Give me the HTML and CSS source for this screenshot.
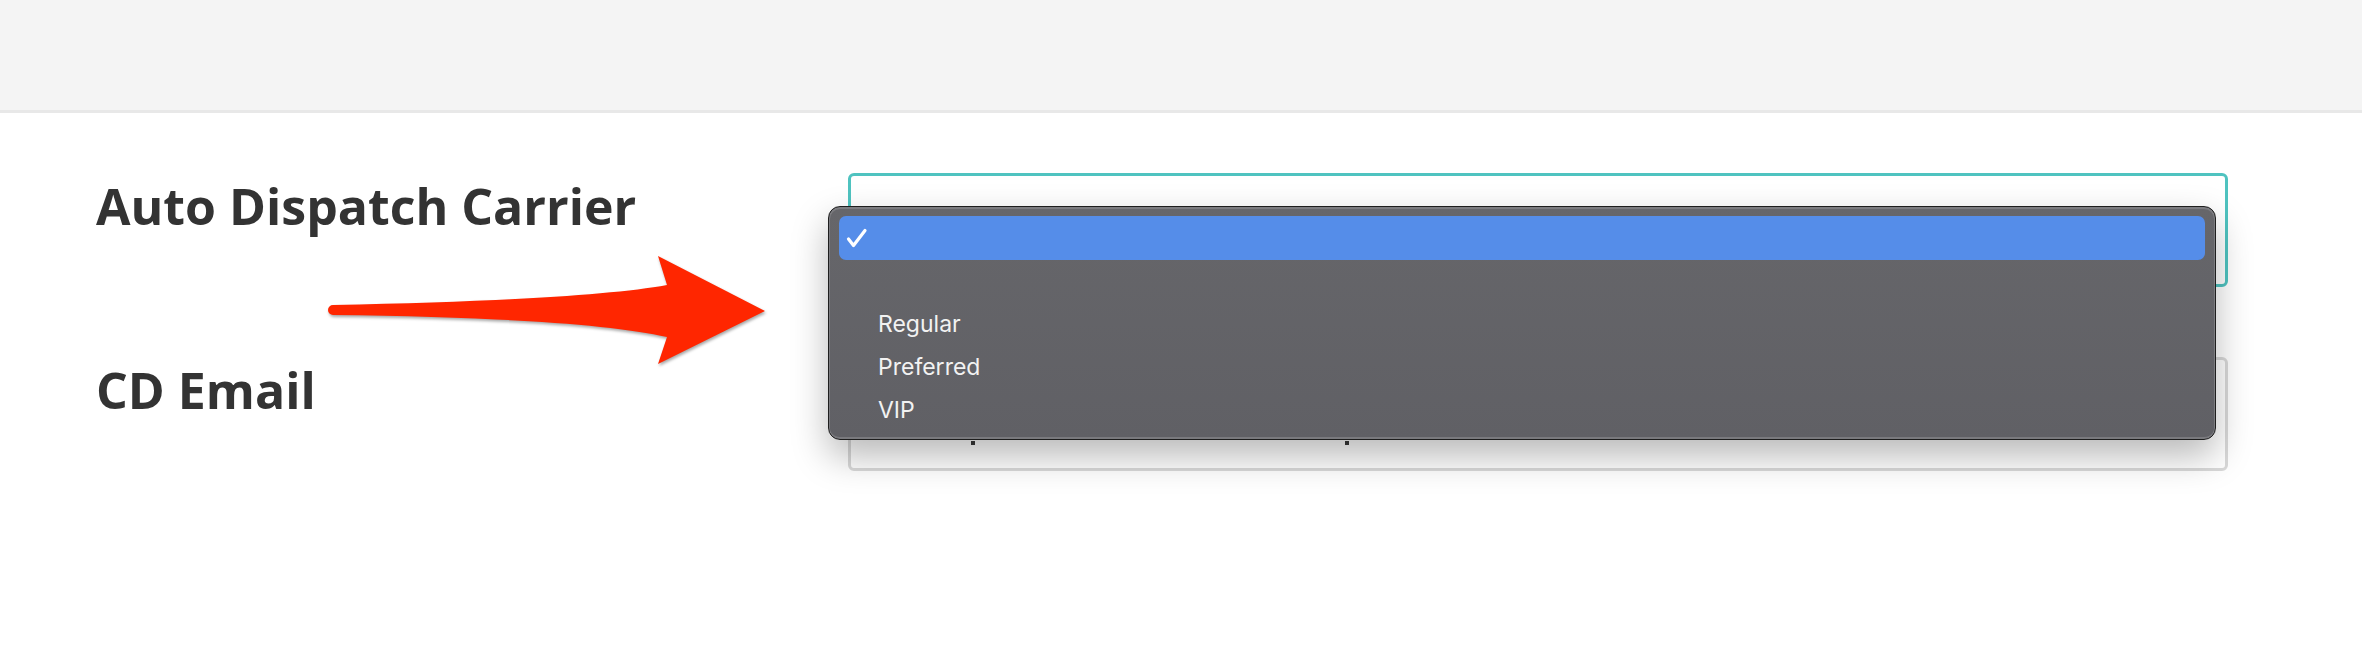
FILE: index.html
```html
<!DOCTYPE html>
<html lang="en">
<head>
  <meta charset="UTF-8" />
  <meta name="viewport" content="width=device-width, initial-scale=1.0"/>
  <title>Carrier Settings</title>
  <link rel="stylesheet" href="styles.css">
</head>
<body>

  <div class="topbar"></div>

  <div class="settings-form">
    <div class="form-row">
      <label class="form-label">Auto Dispatch Carrier</label>
      <div class="field field-focus">
        <!-- open dropdown of the select -->
        <div class="menu">
          <div class="menu-item selected">
            <svg class="check" width="22" height="20" viewBox="0 0 22 20">
              <path d="M2.5 11 L7.5 17.5 L19 2.5" fill="none" stroke="#fff" stroke-width="3.2" stroke-linecap="round" stroke-linejoin="round"/>
            </svg>
          </div>
          <div class="menu-item"></div>
          <div class="menu-item">Regular</div>
          <div class="menu-item">Preferred</div>
          <div class="menu-item">VIP</div>
        </div>
      </div>
    </div>

    <div class="form-row">
      <label class="form-label">CD Email</label>
      <div class="field">
        <span class="tick"></span>
        <span class="tick"></span>
      </div>
    </div>
  </div>

  <!-- annotation arrow -->
  <svg class="arrow" width="460" height="120" viewBox="320 250 460 120">
    <path d="M333 305 Q585 300 667 285 L658 256 L765 311 L658 364 L667 337 Q585 318 333 315 A5 5 0 0 1 333 305 Z" fill="#ff2600"/>
  </svg>

</body>
</html>
```

FILE: styles.css
```css
body {
  margin: 0;
  font-family: "Open Sans", Arial, sans-serif;
  background: #fff;
  position: relative;
  min-height: 668px;
  overflow: hidden;
}

.topbar {
  height: 110px;
  background: #f4f4f4;
  border-bottom: 3px solid #e8e8e8;
}

.settings-form {
  padding: 60px 134px 0 96px;
  display: flex;
  flex-direction: column;
  gap: 70px;
}

.form-row {
  display: flex;
  align-items: flex-start;
}

.form-label {
  width: 752px;
  flex-shrink: 0;
  font-size: 50px;
  line-height: 50px;
  font-weight: 700;
  color: #333;
  padding-top: 8px;
}

.field {
  flex: 1;
  height: 114px;
  box-sizing: border-box;
  border: 3px solid #d9d9d9;
  border-radius: 6px;
  background: #fff;
  position: relative;
  display: flex;
  align-items: flex-start;
  gap: 370px;
  padding: 81px 0 0 120px;
}
.field-focus {
  border-color: #4fc3c0;
  z-index: 2;
}

.tick {
  width: 4px;
  height: 4px;
  background: #3a3a3a;
}

/* Dropdown menu */
.menu {
  position: absolute;
  left: -23px;
  top: 30px;
  width: 1388px;
  height: 234px;
  box-sizing: border-box;
  padding: 9px 10px 0;
  background: linear-gradient(#66666a, #606065);
  border: 1px solid #1e1e1e;
  border-radius: 12px;
  box-shadow: inset 0 1px 0 1px #7c7c80, inset 0 -2px 0 #7a7a7e, 0 16px 36px rgba(0, 0, 0, 0.28);
  font-family: Inter, "Noto Sans", sans-serif;
}
.menu-item {
  height: 43px;
  line-height: 43px;
  padding-left: 39px;
  font-size: 23px;
  color: #f2f2f2;
  border-radius: 7px;
}
.menu-item.selected {
  height: 44px;
  background: #558de9;
  padding-left: 7px;
  display: flex;
  align-items: center;
}

/* Annotation arrow */
.arrow {
  position: absolute;
  left: 320px;
  top: 250px;
  filter: drop-shadow(1px 2px 1.5px rgba(0, 0, 0, 0.35));
}
```
